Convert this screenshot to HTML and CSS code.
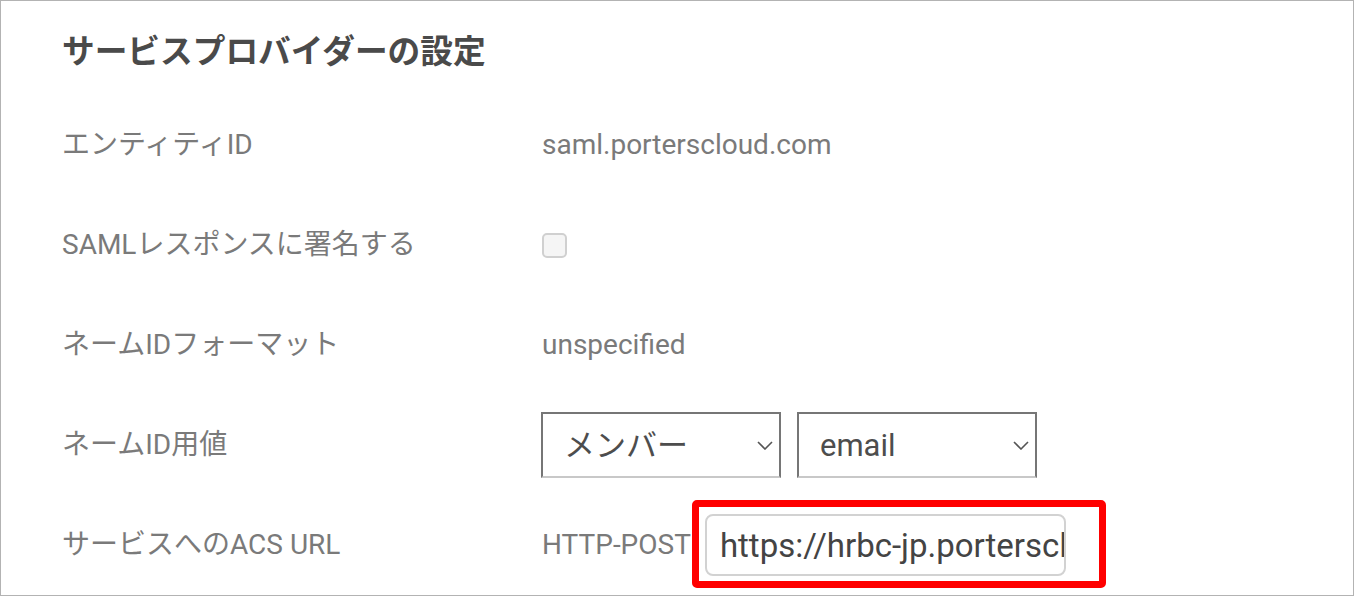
FILE: index.html
```html
<!DOCTYPE html>
<html lang="ja">
<head>
<meta charset="utf-8">
<title>サービスプロバイダーの設定</title>
<link rel="stylesheet" href="styles.css">
</head>
<body>
<div class="page">
  <header class="head">
    <h1 class="title">サービスプロバイダーの設定</h1>
  </header>
  <div class="rows">
    <div class="row">
      <div class="label">エンティティID</div>
      <div class="value text-value">saml.porterscloud.com</div>
    </div>
    <div class="row">
      <div class="label">SAMLレスポンスに署名する</div>
      <div class="value"><span class="checkbox"></span></div>
    </div>
    <div class="row">
      <div class="label">ネームIDフォーマット</div>
      <div class="value text-value">unspecified</div>
    </div>
    <div class="row">
      <div class="label">ネームID用値</div>
      <div class="value selects">
        <div class="select"><span class="select-text">メンバー</span><svg class="chev" width="16" height="9" viewBox="0 0 16 9"><path d="M1 1 L8 8 L15 1" fill="none" stroke="#555" stroke-width="1.6"/></svg></div>
        <div class="select"><span class="select-text">email</span><svg class="chev" width="16" height="9" viewBox="0 0 16 9"><path d="M1 1 L8 8 L15 1" fill="none" stroke="#555" stroke-width="1.6"/></svg></div>
      </div>
    </div>
    <div class="row">
      <div class="label">サービスへのACS URL</div>
      <div class="value acs">
        <span class="method">HTTP-POST</span>
        <div class="input-wrap">
          <input class="url" type="text" value="https://hrbc-jp.porterscl" readonly>
          <div class="highlight"></div>
        </div>
      </div>
    </div>
  </div>
</div>
</body>
</html>
```

FILE: styles.css
```css
html, body {
  margin: 0;
  padding: 0;
  background: #ffffff;
}

body {
  font-family: Roboto, "Noto Sans CJK JP", sans-serif;
}

.page {
  box-sizing: border-box;
  width: 1354px;
  height: 596px;
  border: 1px solid #b3b3b3;
  background: #ffffff;
  padding-left: 61px;
  overflow: hidden;
}

.head {
  height: 94px;
  padding-top: 9px;
  box-sizing: border-box;
  display: flex;
  align-items: center;
}

.title {
  margin: 0;
  font-size: 32.7px;
  font-weight: 700;
  color: #4a4a4a;
  line-height: 1;
}

.row {
  display: grid;
  grid-template-columns: 480px 1fr;
  align-items: center;
  height: 100px;
}

.label {
  font-size: 28px;
  color: #7a7a7a;
  padding-bottom: 6px;
}

.value {
  font-size: 28px;
  color: #7a7a7a;
}

.text-value {
  padding-bottom: 1px;
}

.checkbox {
  display: block;
  width: 21px;
  height: 21px;
  border: 2px solid #d0d0d0;
  border-radius: 5px;
  background: #f5f5f5;
}

.selects {
  display: flex;
  gap: 16px;
  margin-left: -1px;
}

.select {
  box-sizing: border-box;
  width: 240px;
  height: 66px;
  border: 2px solid #767676;
  border-bottom-color: #c8c8c8;
  display: flex;
  align-items: center;
  justify-content: space-between;
  padding: 0 6px 0 21px;
  color: #4d4d4d;
  font-size: 31px;
  background: #ffffff;
}

.select-text {
  line-height: 1;
}

.acs {
  display: flex;
  align-items: center;
  gap: 14px;
}

.method {
  color: #7a7a7a;
  padding-bottom: 2px;
}

.input-wrap {
  position: relative;
  width: 361px;
  height: 62px;
}

.url {
  box-sizing: border-box;
  width: 361px;
  height: 62px;
  border: 2px solid #d2d2d2;
  border-radius: 8px;
  padding: 0 0 0 13px;
  margin: 0;
  font-family: Roboto, "Noto Sans CJK JP", sans-serif;
  font-size: 33px;
  color: #444444;
  background: #ffffff;
  outline: none;
}

.highlight {
  position: absolute;
  left: -13px;
  top: -14px;
  right: -40px;
  bottom: -12px;
  border: 7px solid #ff0000;
  border-radius: 5px;
  pointer-events: none;
}
```
